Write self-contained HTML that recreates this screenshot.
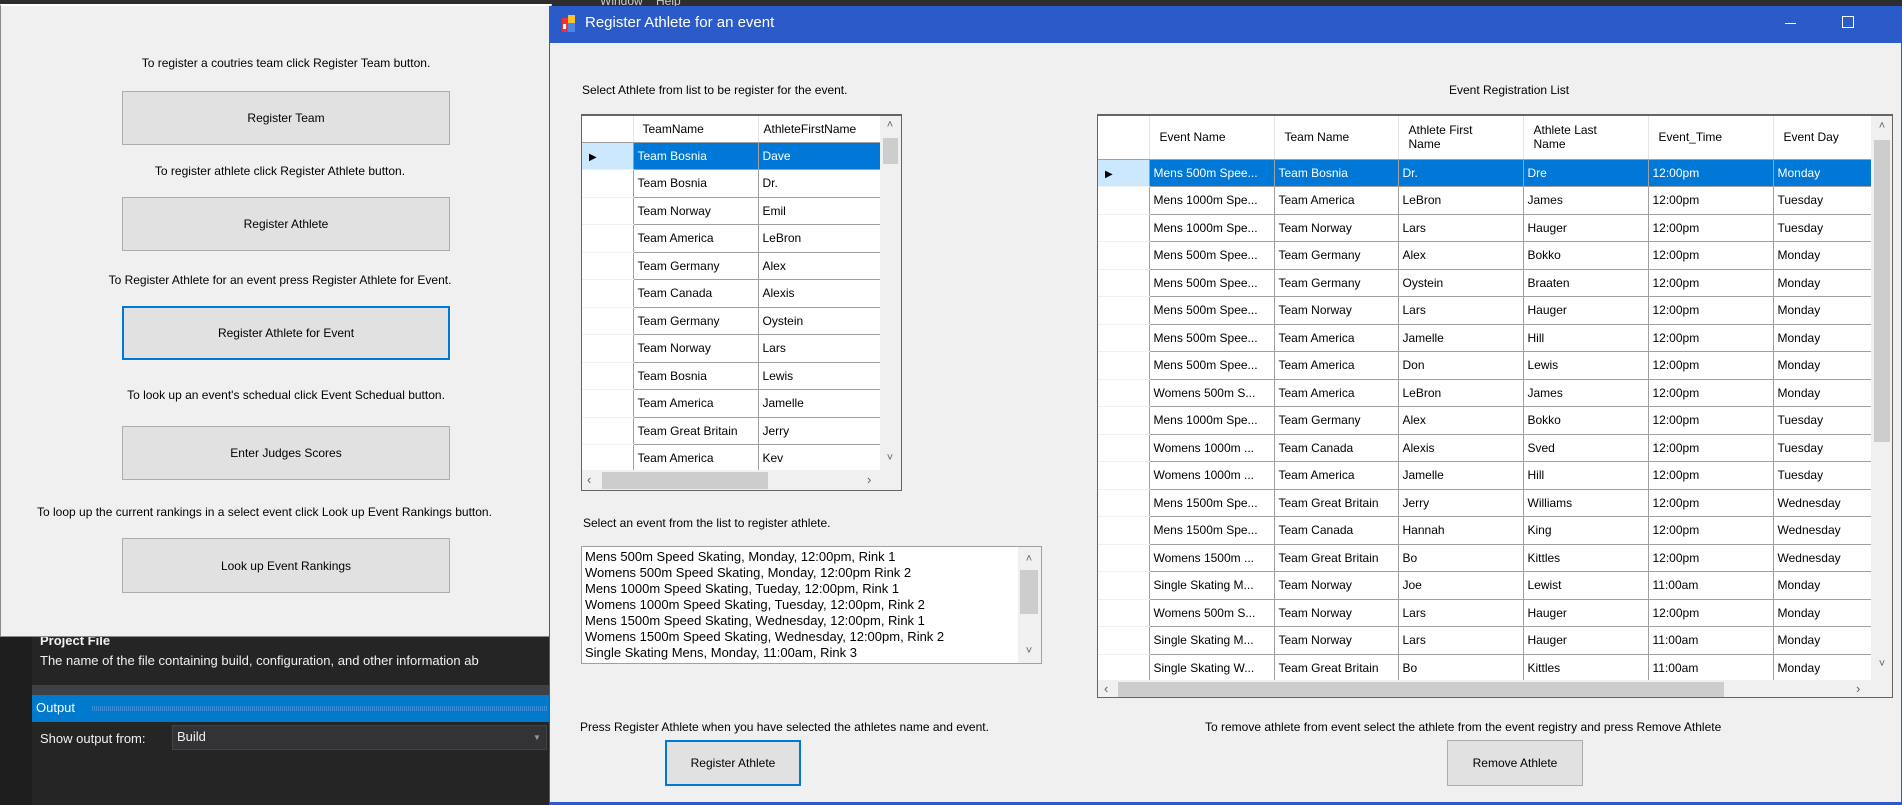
<!DOCTYPE html>
<html><head><meta charset="utf-8">
<style>
*{box-sizing:border-box;margin:0;padding:0}
body{width:1902px;height:805px;overflow:hidden;background:#252526;font-family:"Liberation Sans",Arial,sans-serif;font-size:12px;color:#000;position:relative}
.a{position:absolute}
.lbl{position:absolute;white-space:nowrap;font-size:12px;color:#000}
.btn{position:absolute;background:#e1e1e1;border:1px solid #adadad;display:flex;align-items:center;justify-content:center;font-size:12px}
.btn.sel{border:2px solid #0078d7}
table{border-collapse:collapse;table-layout:fixed}
td{height:27.5px;border-right:1px solid #a0a0a0;border-bottom:1px solid #a0a0a0;padding:0 4px;white-space:nowrap;overflow:hidden;background:#fff;font-size:12px}
td.rh{border-right:1px solid #a0a0a0;border-bottom:1px solid #f0f0f0;background:#fff;padding:0}
tr.s td{background:#0078d7;color:#fff}
tr.s td.rh{background:#cce8ff;color:#000}
th{height:43px;font-weight:normal;text-align:left;padding:0 5px;border-right:1px solid #e5e5e5;border-bottom:1px solid #a0a0a0;background:#fff;font-size:12px;line-height:14px}
.vs{position:absolute;background:#f0f0f0}
.arr{position:absolute;font-size:11px;color:#606060;width:20px;text-align:center}
</style></head><body>
<div class="a" style="left:0;top:0;width:1902px;height:8px;background:#2d2d30"></div>
<div class="a" style="left:600px;top:-6px;color:#ccc;font-size:12px">Window&nbsp;&nbsp;&nbsp;&nbsp;Help</div>
<div class="a" style="left:0;top:630px;width:32px;height:175px;background:#1e1e1e"></div>
<div class="a" style="left:32px;top:630px;width:520px;height:175px;background:#252526"></div>
<div class="a" style="left:40px;top:633px;color:#f1f1f1;font-weight:bold;font-size:13px">Project File</div>
<div class="a" style="left:40px;top:653px;color:#f1f1f1;font-size:13px;white-space:nowrap">The name of the file containing build, configuration, and other information ab</div>
<div class="a" style="left:32px;top:685px;width:520px;height:10px;background:#3f3f46"></div>
<div class="a" style="left:32px;top:695px;width:520px;height:27px;background:#007acc"></div>
<div class="a" style="left:36px;top:700px;color:#fff;font-size:13px">Output</div>
<div class="a" style="left:92px;top:706px;width:455px;height:5px;background:repeating-linear-gradient(90deg,#3a8fd8 0 1px,transparent 1px 2px)"></div>
<div class="a" style="left:40px;top:731px;color:#f1f1f1;font-size:13px">Show output from:</div>
<div class="a" style="left:172px;top:725px;width:375px;height:25px;background:#333337;border:1px solid #434346"></div>
<div class="a" style="left:177px;top:729px;color:#f1f1f1;font-size:13px">Build</div>
<div class="a" style="left:533px;top:733px;color:#999;font-size:8px">▼</div>

<div class="a" style="left:0;top:4px;width:552px;height:633px;background:#f0f0f0;border:1px solid #8a8a8a;border-top:2px solid #fff"></div>
<div class="lbl" style="left:0;width:572px;text-align:center;top:56px">To register a coutries team click Register Team button.</div>
<div class="btn" style="left:122px;top:91px;width:328px;height:54px">Register Team</div>
<div class="lbl" style="left:0;width:560px;text-align:center;top:164px">To register athlete click Register Athlete button.</div>
<div class="btn" style="left:122px;top:197px;width:328px;height:54px">Register Athlete</div>
<div class="lbl" style="left:0;width:560px;text-align:center;top:273px">To Register Athlete for an event press Register Athlete for Event.</div>
<div class="btn sel" style="left:122px;top:306px;width:328px;height:54px">Register Athlete for Event</div>
<div class="lbl" style="left:0;width:572px;text-align:center;top:388px">To look up an event's schedual click Event Schedual button.</div>
<div class="btn" style="left:122px;top:426px;width:328px;height:54px">Enter Judges Scores</div>
<div class="lbl" style="left:37px;top:505px">To loop up the current rankings in a select event click Look up Event Rankings button.</div>
<div class="btn" style="left:122px;top:538px;width:328px;height:55px">Look up Event Rankings</div>

<div class="a" style="left:549px;top:6px;width:1353px;height:799px;background:#f0f0f0;border:1px solid #2a5bc8;border-bottom:3px solid #2a5bc8"></div>
<div class="a" style="left:549px;top:6px;width:1353px;height:37px;background:#2a5bc8"></div>
<svg class="a" style="left:562px;top:15px" width="14" height="18" viewBox="0 0 14 18"><rect x="0" y="3" width="6" height="14" fill="#e33"/><rect x="6" y="0" width="7" height="8" fill="#f7c22d"/><rect x="6" y="8" width="7" height="9" fill="#4a86e8"/><rect x="1" y="9" width="3" height="5" fill="#fff"/></svg>
<div class="a" style="left:585px;top:14px;color:#fff;font-size:15px">Register Athlete for an event</div>
<div class="a" style="left:1785px;top:23px;width:11px;height:1px;background:#fff"></div>
<div class="a" style="left:1842px;top:16px;width:12px;height:12px;border:1px solid #fff"></div>

<div class="lbl" style="left:582px;top:83px">Select Athlete from list to be register for the event.</div>
<div class="lbl" style="left:1449px;top:83px">Event Registration List</div>

<div class="a" style="left:581px;top:114px;width:321px;height:377px;border:1px solid #646464;border-top-width:2px;background:#f0f0f0;overflow:hidden">
<table style="width:299px">
<colgroup><col style="width:51px"><col style="width:125px"><col style="width:123px"></colgroup>
<tr><th style="height:26px"></th><th style="height:26px;padding-left:9px">TeamName</th><th style="height:26px">AthleteFirstName</th></tr>
<tr class="s"><td class="rh"><span style="margin-left:7px;font-size:10px">▶</span></td><td>Team Bosnia</td><td>Dave</td></tr>
<tr><td class="rh"></td><td>Team Bosnia</td><td>Dr.</td></tr>
<tr><td class="rh"></td><td>Team Norway</td><td>Emil</td></tr>
<tr><td class="rh"></td><td>Team America</td><td>LeBron</td></tr>
<tr><td class="rh"></td><td>Team Germany</td><td>Alex</td></tr>
<tr><td class="rh"></td><td>Team Canada</td><td>Alexis</td></tr>
<tr><td class="rh"></td><td>Team Germany</td><td>Oystein</td></tr>
<tr><td class="rh"></td><td>Team Norway</td><td>Lars</td></tr>
<tr><td class="rh"></td><td>Team Bosnia</td><td>Lewis</td></tr>
<tr><td class="rh"></td><td>Team America</td><td>Jamelle</td></tr>
<tr><td class="rh"></td><td>Team Great Britain</td><td>Jerry</td></tr>
<tr><td class="rh"></td><td>Team America</td><td>Kev</td></tr>
</table>
<div class="vs" style="left:298px;top:0;width:20px;height:354px"></div>
<div class="a" style="left:301px;top:22px;width:15px;height:26px;background:#cdcdcd"></div>
<div class="arr" style="left:298px;top:3px">˄</div>
<div class="arr" style="left:298px;top:336px">˅</div>
<div class="vs" style="left:0;top:354px;width:319px;height:21px"></div>
<div class="a" style="left:20px;top:356px;width:166px;height:17px;background:#cdcdcd"></div>
<div class="a" style="left:5px;top:356px;color:#606060;font-size:13px">‹</div>
<div class="a" style="left:285px;top:356px;color:#606060;font-size:13px">›</div>
</div>

<div class="lbl" style="left:583px;top:516px">Select an event from the list to register athlete.</div>
<div class="a" style="left:581px;top:546px;width:461px;height:118px;background:#fff;border:1px solid #a0a0a0;font-size:13px;line-height:16px;padding:2px 0 0 3px;white-space:nowrap;overflow:hidden">
Mens 500m Speed Skating, Monday, 12:00pm, Rink 1<br>Womens 500m Speed Skating, Monday, 12:00pm Rink 2<br>Mens 1000m Speed Skating, Tueday, 12:00pm, Rink 1<br>Womens 1000m Speed Skating, Tuesday, 12:00pm, Rink 2<br>Mens 1500m Speed Skating, Wednesday, 12:00pm, Rink 1<br>Womens 1500m Speed Skating, Wednesday, 12:00pm, Rink 2<br>Single Skating Mens, Monday, 11:00am, Rink 3
<div class="vs" style="left:436px;top:0;width:23px;height:116px;background:#f0f0f0"></div>
<div class="a" style="left:438px;top:23px;width:18px;height:44px;background:#cdcdcd"></div>
<div class="arr" style="left:437px;top:4px">˄</div>
<div class="arr" style="left:437px;top:96px">˅</div>
</div>

<div class="lbl" style="left:580px;top:720px">Press Register Athlete when you have selected the athletes name and event.</div>
<div class="btn sel" style="left:665px;top:740px;width:136px;height:46px">Register Athlete</div>

<div class="a" style="left:1097px;top:114px;width:796px;height:584px;border:1px solid #646464;border-top-width:2px;background:#f0f0f0;overflow:hidden">
<table style="width:800px">
<colgroup><col style="width:51px"><col style="width:125px"><col style="width:124px"><col style="width:125px"><col style="width:125px"><col style="width:125px"><col style="width:125px"></colgroup>
<tr><th></th><th style="padding-left:10px">Event Name</th><th style="padding-left:10px">Team Name</th><th style="padding-left:10px">Athlete First<br>Name</th><th style="padding-left:10px">Athlete Last<br>Name</th><th style="padding-left:10px">Event_Time</th><th style="padding-left:10px">Event Day</th></tr>
<tr class="s"><td class="rh"><span style="margin-left:7px;font-size:10px">▶</span></td><td>Mens 500m Spee...</td><td>Team Bosnia</td><td>Dr.</td><td>Dre</td><td>12:00pm</td><td>Monday</td></tr>
<tr><td class="rh"></td><td>Mens 1000m Spe...</td><td>Team America</td><td>LeBron</td><td>James</td><td>12:00pm</td><td>Tuesday</td></tr>
<tr><td class="rh"></td><td>Mens 1000m Spe...</td><td>Team Norway</td><td>Lars</td><td>Hauger</td><td>12:00pm</td><td>Tuesday</td></tr>
<tr><td class="rh"></td><td>Mens 500m Spee...</td><td>Team Germany</td><td>Alex</td><td>Bokko</td><td>12:00pm</td><td>Monday</td></tr>
<tr><td class="rh"></td><td>Mens 500m Spee...</td><td>Team Germany</td><td>Oystein</td><td>Braaten</td><td>12:00pm</td><td>Monday</td></tr>
<tr><td class="rh"></td><td>Mens 500m Spee...</td><td>Team Norway</td><td>Lars</td><td>Hauger</td><td>12:00pm</td><td>Monday</td></tr>
<tr><td class="rh"></td><td>Mens 500m Spee...</td><td>Team America</td><td>Jamelle</td><td>Hill</td><td>12:00pm</td><td>Monday</td></tr>
<tr><td class="rh"></td><td>Mens 500m Spee...</td><td>Team America</td><td>Don</td><td>Lewis</td><td>12:00pm</td><td>Monday</td></tr>
<tr><td class="rh"></td><td>Womens 500m S...</td><td>Team America</td><td>LeBron</td><td>James</td><td>12:00pm</td><td>Monday</td></tr>
<tr><td class="rh"></td><td>Mens 1000m Spe...</td><td>Team Germany</td><td>Alex</td><td>Bokko</td><td>12:00pm</td><td>Tuesday</td></tr>
<tr><td class="rh"></td><td>Womens 1000m ...</td><td>Team Canada</td><td>Alexis</td><td>Sved</td><td>12:00pm</td><td>Tuesday</td></tr>
<tr><td class="rh"></td><td>Womens 1000m ...</td><td>Team America</td><td>Jamelle</td><td>Hill</td><td>12:00pm</td><td>Tuesday</td></tr>
<tr><td class="rh"></td><td>Mens 1500m Spe...</td><td>Team Great Britain</td><td>Jerry</td><td>Williams</td><td>12:00pm</td><td>Wednesday</td></tr>
<tr><td class="rh"></td><td>Mens 1500m Spe...</td><td>Team Canada</td><td>Hannah</td><td>King</td><td>12:00pm</td><td>Wednesday</td></tr>
<tr><td class="rh"></td><td>Womens 1500m ...</td><td>Team Great Britain</td><td>Bo</td><td>Kittles</td><td>12:00pm</td><td>Wednesday</td></tr>
<tr><td class="rh"></td><td>Single Skating M...</td><td>Team Norway</td><td>Joe</td><td>Lewist</td><td>11:00am</td><td>Monday</td></tr>
<tr><td class="rh"></td><td>Womens 500m S...</td><td>Team Norway</td><td>Lars</td><td>Hauger</td><td>12:00pm</td><td>Monday</td></tr>
<tr><td class="rh"></td><td>Single Skating M...</td><td>Team Norway</td><td>Lars</td><td>Hauger</td><td>11:00am</td><td>Monday</td></tr>
<tr><td class="rh"></td><td>Single Skating W...</td><td>Team Great Britain</td><td>Bo</td><td>Kittles</td><td>11:00am</td><td>Monday</td></tr>
</table>
<div class="vs" style="left:773px;top:0;width:21px;height:564px"></div>
<div class="a" style="left:776px;top:24px;width:16px;height:302px;background:#cdcdcd"></div>
<div class="arr" style="left:774px;top:4px">˄</div>
<div class="arr" style="left:774px;top:542px">˅</div>
<div class="vs" style="left:0;top:564px;width:794px;height:20px"></div>
<div class="a" style="left:20px;top:566px;width:606px;height:16px;background:#cdcdcd"></div>
<div class="a" style="left:6px;top:565px;color:#606060;font-size:13px">‹</div>
<div class="a" style="left:758px;top:565px;color:#606060;font-size:13px">›</div>
</div>

<div class="lbl" style="left:1205px;top:720px">To remove athlete from event select the athlete from the event registry and press Remove Athlete</div>
<div class="btn" style="left:1447px;top:740px;width:136px;height:46px">Remove Athlete</div>
</body></html>
